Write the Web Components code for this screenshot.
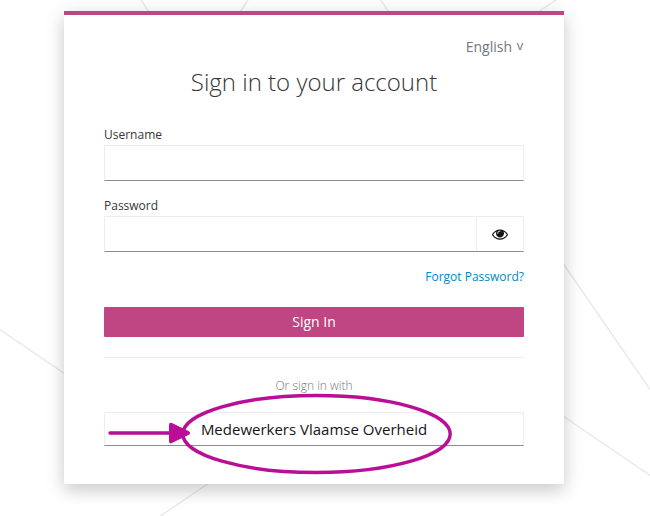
<!DOCTYPE html>
<html lang="en">
<head>
<meta charset="utf-8">
<title>Sign in to your account</title>
<style>
html,body{margin:0;height:516px;overflow:hidden;background:#fff}
body{font-family:"Open Sans","Noto Sans",sans-serif;color:#363636}
</style>
</head>
<body>
<login-page>
  <login-card>
    <locale-picker slot="locale">English</locale-picker>
    <span slot="title">Sign in to your account</span>
    <text-field label="Username"></text-field>
    <text-field label="Password" type="password"></text-field>
    <forgot-link>Forgot Password?</forgot-link>
    <submit-button>Sign In</submit-button>
    <social-login heading="Or sign in with">Medewerkers Vlaamse Overheid</social-login>
  </login-card>
</login-page>
<script>
function define(name, html) {
  customElements.define(name, class extends HTMLElement {
    constructor() {
      super();
      const t = document.createElement('template');
      t.innerHTML = html;
      this.attachShadow({mode: 'open'}).append(t.content.cloneNode(true));
    }
    connectedCallback() {
      for (const n of this.shadowRoot.querySelectorAll('[data-attr]'))
        n.textContent = this.getAttribute(n.dataset.attr) || '';
    }
  });
}

define('login-page', `
<style>
:host{display:block;position:relative;isolation:isolate;width:650px;height:516px;box-sizing:border-box;padding:11px 0 0 64px;overflow:hidden;background:#fff}
svg{position:absolute;left:0;top:0}
.bg{z-index:-1}
.marks{pointer-events:none}
</style>
<svg class="bg" width="650" height="516" fill="none" stroke="#e9e9e9" stroke-width="1.5">
<path d="M140.5 -1L150 14M248.500 -1L239 14M380 -1L390 14M557.500 -1L535 14M560 259L651 391M560 414L651 476M-1 329L68 376M159 517L212 481"/>
</svg>
<slot></slot>
<svg class="marks" width="650" height="516" fill="none" stroke="#b90e95" stroke-width="3.400" stroke-linecap="round" stroke-linejoin="round">
<ellipse cx="316.500" cy="434" rx="133.700" ry="38.500"/>
<path d="M110 433H172"/>
<path d="M171 424.700L188 433L171 441.300Z" fill="#b90e95" stroke-width="4"/>
</svg>`);

define('login-card', `
<style>
:host{display:block;box-sizing:border-box;width:500px;height:473px;padding:22px 40px 0;background:#fff;border-top:4px solid #bf4583;box-shadow:0 4px 20px rgba(3,3,3,.14),0 8px 14px rgba(3,3,3,.09)}
.locale{display:flex;justify-content:flex-end;height:20px}
h1{margin:9px 0 0;font-size:24px;line-height:31px;font-weight:300;text-align:center;height:60px}
</style>
<div class="locale"><slot name="locale"></slot></div>
<h1><slot name="title"></slot></h1>
<slot></slot>`);

define('locale-picker', `
<style>
:host{display:flex;gap:4px;font-size:14px;line-height:20px;color:#72767b}
.v{font-size:13px;line-height:16px;width:8px;text-align:center}
</style>
<slot></slot><span class="v">v</span>`);

define('text-field', `
<style>
:host{display:block;height:71px}
label{display:block;font-size:12px;line-height:18px;height:19px}
.box{display:flex;box-sizing:border-box;height:36px;border:1px solid #ededed;border-bottom-color:#8a8d90}
.box i{flex:1}
.eye{display:none;width:46px;border-left:1px solid #ededed;align-items:center;justify-content:center}
:host([type=password]) .eye{display:flex}
</style>
<label data-attr="label"></label>
<div class="box"><i></i><span class="eye"><svg width="16" height="16" viewBox="0 0 1792 1792" fill="#151515"><path d="M1664 960q-152-236-381-353 61 104 61 225 0 185-131.500 316.500t-316.500 131.500-316.500-131.500-131.500-316.500q0-121 61-225-229 117-381 353 133 205 333.500 326.500t434.500 121.500 434.500-121.500 333.500-326.500zm-720-384q0-20-14-34t-34-14q-125 0-214.500 89.500t-89.500 214.500q0 20 14 34t34 14 34-14 14-34q0-86 61-147t147-61q20 0 34-14t14-34zm848 384q0 34-20 69-140 230-376.500 368.500t-499.500 138.500-499.500-139-376.500-368q-20-35-20-69t20-69q140-229 376.500-368t499.500-139 499.500 139 376.500 368q20 35 20 69z"/></svg></span></div>`);

define('forgot-link', `
<style>:host{display:block;font-size:12px;line-height:18px;height:39px;text-align:right;color:#0088ce}</style><slot></slot>`);

define('submit-button', `
<style>
:host{display:block}
button{display:block;width:100%;height:30px;padding:0;border:0;border-radius:1px;background:#bf4583;color:#fff;font:14px/30px "Open Sans","Noto Sans",sans-serif}
</style><button><slot></slot></button>`);

define('social-login', `
<style>
:host{display:block;margin-top:20px;border-top:1px solid #ededed;text-align:center}
h2{margin:18px 0 17px;font-size:12px;line-height:19px;font-weight:300;color:#72767b}
a{display:block;box-sizing:border-box;height:34px;border:1px solid #ededed;border-bottom-color:#8a8d90;font-size:15px;line-height:33px;color:#151515}
</style>
<h2 data-attr="heading"></h2><a><slot></slot></a>`);
</script>
</body>
</html>
